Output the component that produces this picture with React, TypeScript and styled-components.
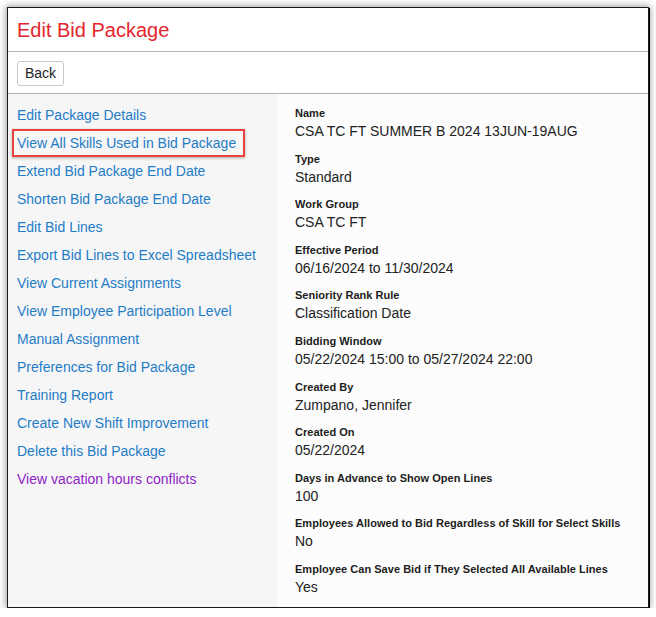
import React, { FC } from 'react';
import styled, { createGlobalStyle } from 'styled-components';

const GlobalStyle = createGlobalStyle`
  html, body {
    margin: 0;
    padding: 0;
    background: #fff;
  }
  body {
    font-family: "Liberation Sans", Arial, sans-serif;
  }
`;

const Frame = styled.div`
  margin: 7px 0 0 7px;
  width: 640px;
  height: 599px;
  border: 1px solid #1a1a1a;
  box-shadow: 1px 1px 0 #000, 0 0 7px 1px rgba(0, 0, 0, 0.4);
  background: #fff;
  display: flex;
  flex-direction: column;
  overflow: hidden;
`;

const Header = styled.div`
  height: 44px;
  border-bottom: 1px solid #b0b0b0;
  display: flex;
  align-items: center;
  padding: 0 9px;
  box-sizing: border-box;
`;

const Title = styled.h1`
  margin: 0;
  font-size: 20px;
  font-weight: normal;
  color: #e3262e;
  padding-top: 1px;
`;

const Toolbar = styled.div`
  height: 42px;
  border-bottom: 1px solid #b0b0b0;
  display: flex;
  align-items: center;
  padding: 1px 9px 0;
  box-sizing: border-box;
`;

const Button = styled.button`
  height: 25px;
  padding: 0 7px;
  font-family: "Liberation Sans", Arial, sans-serif;
  font-size: 14px;
  color: #222;
  background: #fff;
  border: 1px solid #c8c8c8;
  border-radius: 3px;
`;

const Body = styled.div`
  flex: 1;
  display: flex;
`;

const Sidebar = styled.div`
  width: 269px;
  background: #f6f6f6;
  padding: 7px 0 0 9px;
  box-sizing: border-box;
`;

const LinkRow = styled.div`
  height: 28px;
  line-height: 28px;
`;

const Link = styled.a<{ $visited?: boolean }>`
  font-size: 14px;
  color: ${(p) => (p.$visited ? '#8e24c6' : '#1f7cc6')};
  text-decoration: none;
  cursor: pointer;
`;

const Highlight = styled.span`
  display: inline-block;
  margin-left: -5px;
  padding: 0 7px 0 3px;
  line-height: 24px;
  border: 2px solid #e8423f;
  box-shadow: 0 1px 3px rgba(0, 0, 0, 0.3);
`;

const Details = styled.div`
  flex: 1;
  background: #fcfcfc;
  padding: 11px 0 0 18px;
`;

const Field = styled.div`
  margin-bottom: 8.6px;
`;

const Label = styled.div`
  font-size: 11px;
  font-weight: bold;
  line-height: 16px;
  letter-spacing: 0.03px;
  color: #1c1c1c;
`;

const Value = styled.div`
  font-size: 14px;
  line-height: 21px;
  color: #222;
`;

type LinkItem = { text: string; highlight?: boolean; visited?: boolean };

const links: LinkItem[] = [
  { text: 'Edit Package Details' },
  { text: 'View All Skills Used in Bid Package', highlight: true },
  { text: 'Extend Bid Package End Date' },
  { text: 'Shorten Bid Package End Date' },
  { text: 'Edit Bid Lines' },
  { text: 'Export Bid Lines to Excel Spreadsheet' },
  { text: 'View Current Assignments' },
  { text: 'View Employee Participation Level' },
  { text: 'Manual Assignment' },
  { text: 'Preferences for Bid Package' },
  { text: 'Training Report' },
  { text: 'Create New Shift Improvement' },
  { text: 'Delete this Bid Package' },
  { text: 'View vacation hours conflicts', visited: true },
];

const fields: [string, string][] = [
  ['Name', 'CSA TC FT SUMMER B 2024 13JUN-19AUG'],
  ['Type', 'Standard'],
  ['Work Group', 'CSA TC FT'],
  ['Effective Period', '06/16/2024 to 11/30/2024'],
  ['Seniority Rank Rule', 'Classification Date'],
  ['Bidding Window', '05/22/2024 15:00 to 05/27/2024 22:00'],
  ['Created By', 'Zumpano, Jennifer'],
  ['Created On', '05/22/2024'],
  ['Days in Advance to Show Open Lines', '100'],
  ['Employees Allowed to Bid Regardless of Skill for Select Skills', 'No'],
  ['Employee Can Save Bid if They Selected All Available Lines', 'Yes'],
];

const ActionLink: FC<LinkItem> = (props) => {
  const link = <Link $visited={props.visited}>{props.text}</Link>;
  return <LinkRow>{props.highlight ? <Highlight>{link}</Highlight> : link}</LinkRow>;
};

export function App() {
  return (
    <>
      <GlobalStyle />
      <Frame>
        <Header>
          <Title>Edit Bid Package</Title>
        </Header>
        <Toolbar>
          <Button>Back</Button>
        </Toolbar>
        <Body>
          <Sidebar>
            {links.map((l) => (
              <ActionLink key={l.text} {...l} />
            ))}
          </Sidebar>
          <Details>
            {fields.map(([label, value]) => (
              <Field key={label}>
                <Label>{label}</Label>
                <Value>{value}</Value>
              </Field>
            ))}
          </Details>
        </Body>
      </Frame>
    </>
  );
}

export default App;
